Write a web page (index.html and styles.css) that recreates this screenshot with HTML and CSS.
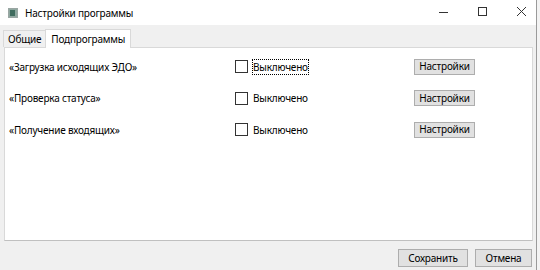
FILE: index.html
```html
<!DOCTYPE html>
<html lang="ru">
<head>
    <meta charset="UTF-8">
    <title>Настройки программы</title>
    <link rel="stylesheet" href="styles.css">
</head>
<body>
    <div class="window">
        <div class="titlebar">
            <svg class="app-icon" width="10" height="10" viewBox="0 0 10 10">
                <rect x="0.5" y="0.5" width="9" height="9" fill="#8fa8a0" stroke="#9aa6a3"/>
                <rect x="2" y="2" width="5" height="6" fill="#3f6b5e"/>
            </svg>
            <span class="title">Настройки программы</span>
            <div class="controls">
                <svg width="39" height="25" viewBox="0 0 39 25"><path d="M15 12.5h9" stroke="#333" stroke-width="1"/></svg>
                <svg width="39" height="25" viewBox="0 0 39 25"><rect x="15.5" y="7.5" width="8" height="8" fill="none" stroke="#333"/></svg>
                <svg width="39" height="25" viewBox="0 0 39 25"><path d="M15 7l9 9M24 7l-9 9" stroke="#333" stroke-width="1"/></svg>
            </div>
        </div>

        <div class="content">
            <div class="tabs">
                <div class="tab">Общие</div>
                <div class="tab active">Подпрограммы</div>
            </div>

            <div class="panel">
                <div class="row">
                    <span class="name">«Загрузка исходящих ЭДО»</span>
                    <label class="check focused"><span class="box"></span><span class="caption">Выключено</span></label>
                    <button class="btn">Настройки</button>
                </div>
                <div class="row">
                    <span class="name">«Проверка статуса»</span>
                    <label class="check"><span class="box"></span><span class="caption">Выключено</span></label>
                    <button class="btn">Настройки</button>
                </div>
                <div class="row">
                    <span class="name">«Получение входящих»</span>
                    <label class="check"><span class="box"></span><span class="caption">Выключено</span></label>
                    <button class="btn">Настройки</button>
                </div>
            </div>

            <div class="footer">
                <button class="btn save">Сохранить</button>
                <button class="btn cancel">Отмена</button>
            </div>
        </div>
    </div>
</body>
</html>
```

FILE: styles.css
```css
body {
    margin: 0;
    padding: 0;
    background-color: #f3f3f3;
    font-family: "Noto Sans", Arial, sans-serif;
    font-size: 10px;
    letter-spacing: -0.2px;
    color: #000;
}

.window {
    width: 536px;
    height: 270px;
    border-right: 1px solid #9a9a9a;
    background-color: #f0f0f0;
}

.titlebar {
    height: 25px;
    background-color: #fff;
    display: flex;
    align-items: center;
}

.app-icon {
    margin-left: 8px;
    margin-right: 7px;
}

.title {
    font-size: 10px;
    flex: 1;
}

.controls {
    display: flex;
    margin-right: -5px;
}

.controls svg {
    display: block;
}

.content {
    padding: 0 3px 0 4px;
}

.tabs {
    display: flex;
    height: 22px;
    margin-left: -1px;
}

.tab {
    border: 1px solid #d9d9d9;
    border-bottom: none;
    background-color: #f0f0f0;
    padding: 0 4px;
    margin-top: 5px;
    line-height: 16px;
}

.tab.active {
    background-color: #fff;
    margin-top: 3px;
    padding: 1px 5px 0;
    margin-left: -1px;
    position: relative;
    top: 1px;
    z-index: 1;
}

.panel {
    height: 194px;
    background-color: #fff;
    border: 1px solid #d9d9d9;
    border-bottom-color: #c0c0c0;
    padding-top: 3px;
    box-sizing: border-box;
}

.row {
    display: grid;
    grid-template-columns: 226px 179px 61px;
    align-items: center;
    height: 31.5px;
    padding-left: 4px;
}

.check {
    display: flex;
    align-items: center;
}

.box {
    width: 11px;
    height: 11px;
    border: 1px solid #333;
    background-color: #fff;
    margin-right: 5px;
}

.check.focused .caption {
    outline: 1px dotted #000;
}

.btn {
    font-family: "Noto Sans", Arial, sans-serif;
    font-size: 10px;
    letter-spacing: -0.2px;
    background-color: #e1e1e1;
    border: 1px solid #adadad;
    height: 16px;
    padding: 0;
    line-height: 13px;
    color: #000;
}

.footer {
    display: flex;
    justify-content: flex-end;
    gap: 7px;
    padding-top: 8px;
    padding-right: 1px;
}

.save {
    width: 70px;
    height: 18px;
}

.cancel {
    width: 57px;
    height: 18px;
}
```
